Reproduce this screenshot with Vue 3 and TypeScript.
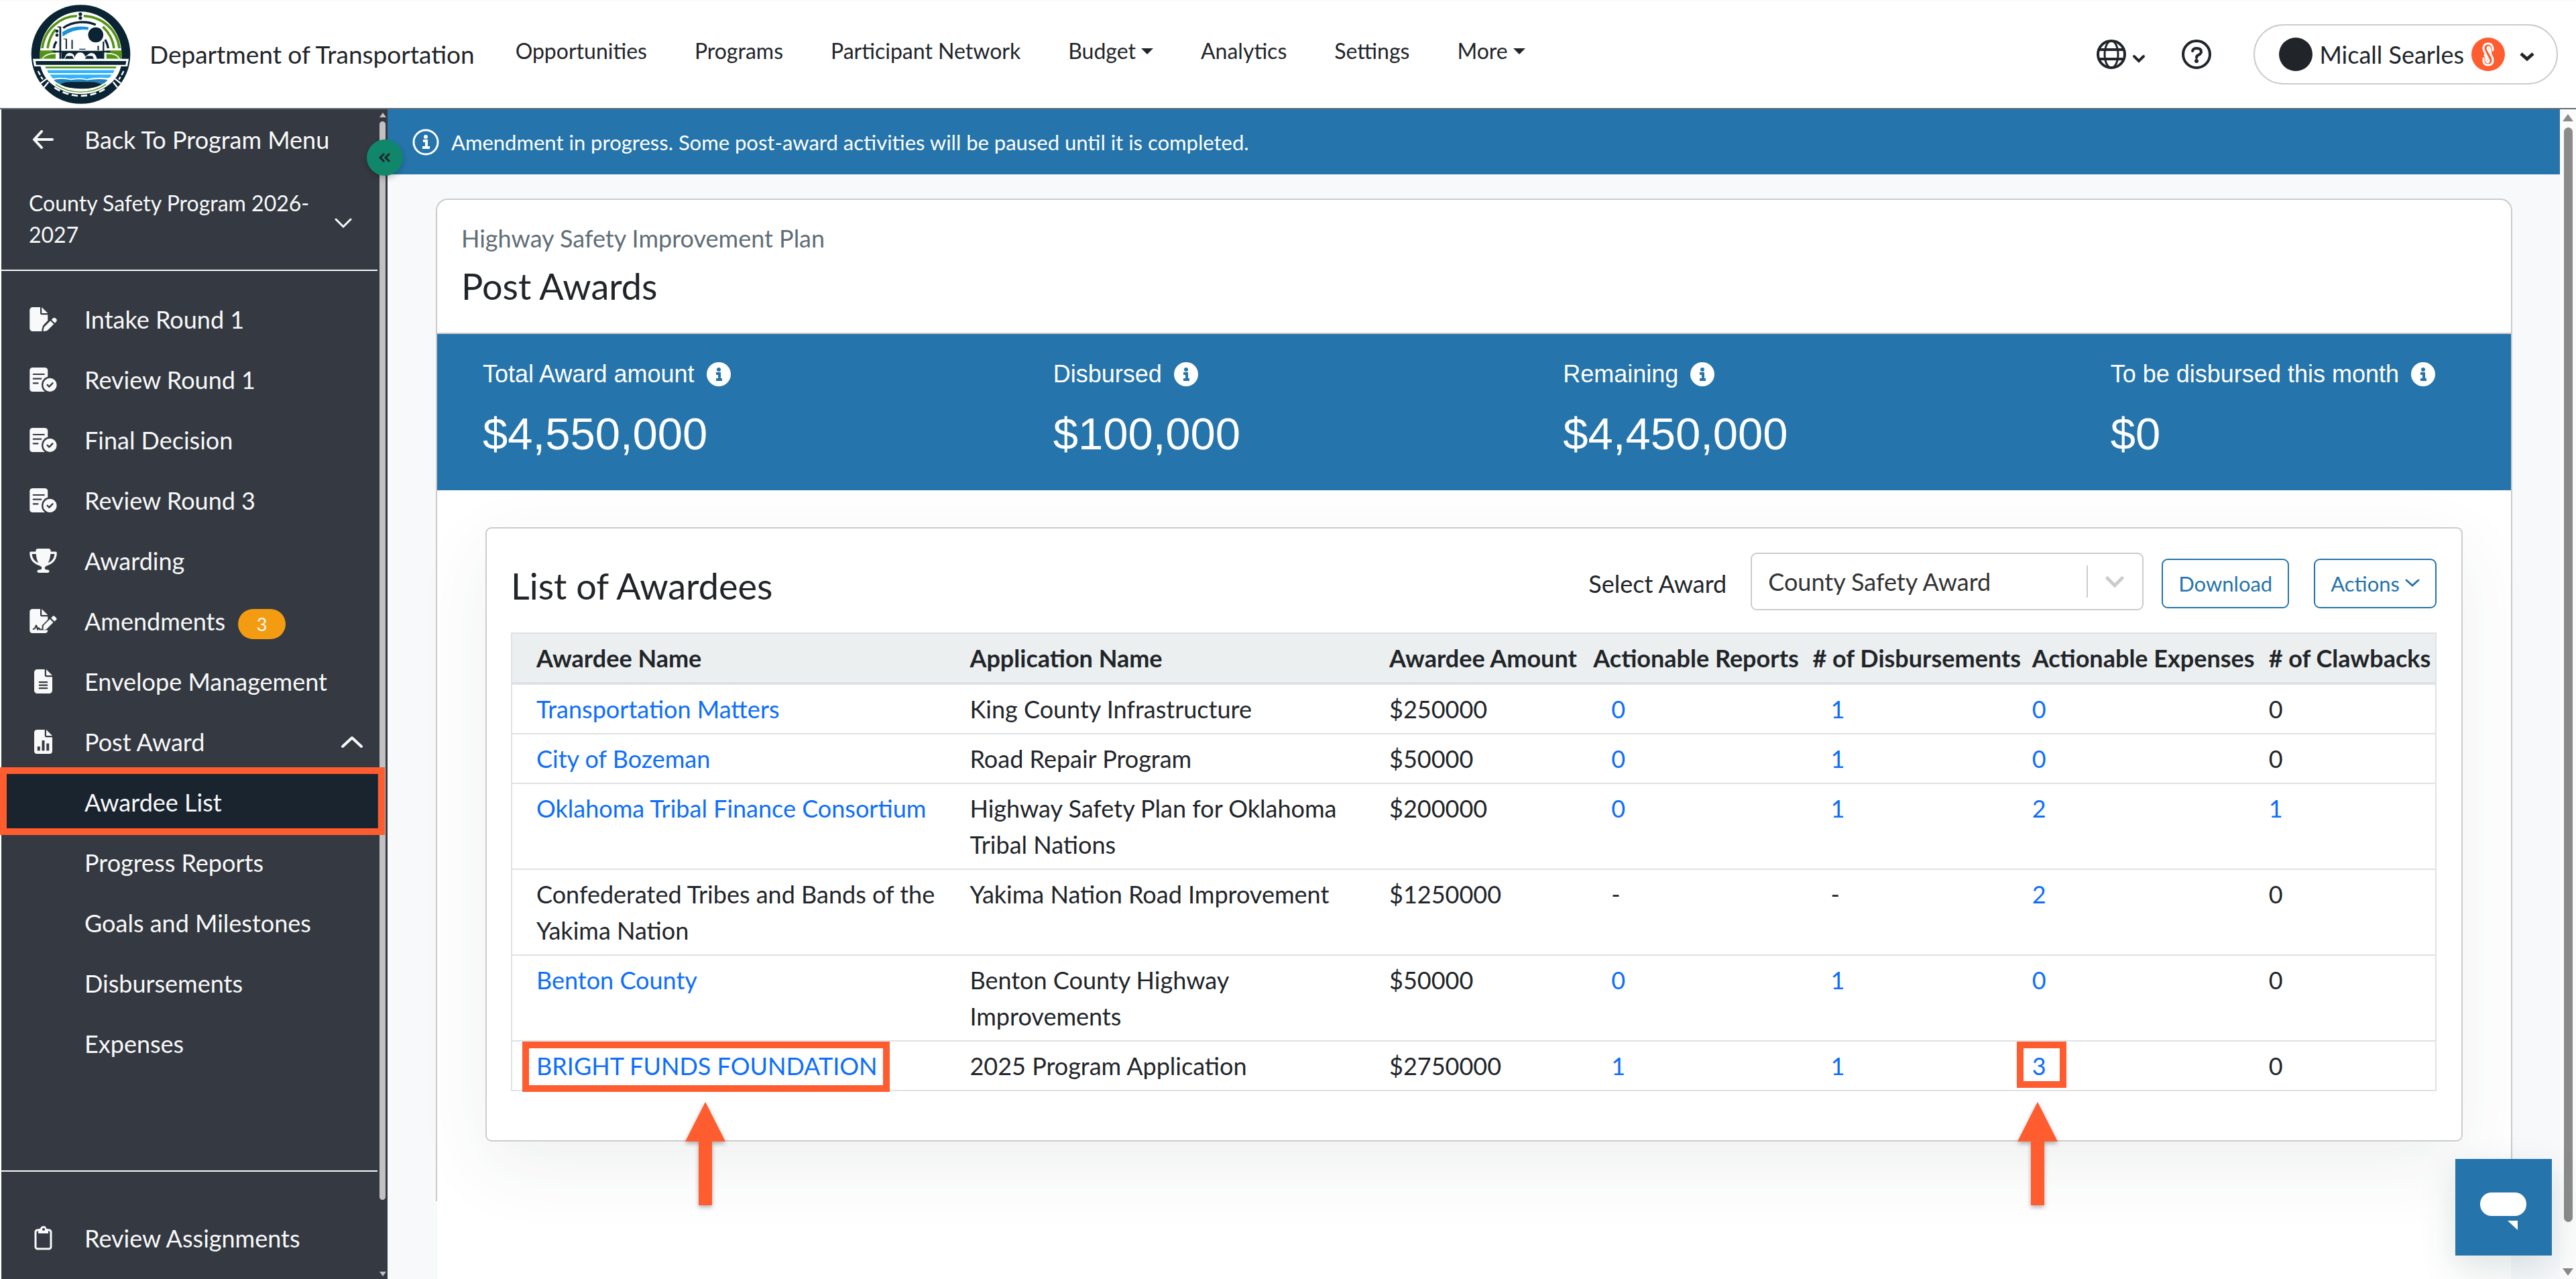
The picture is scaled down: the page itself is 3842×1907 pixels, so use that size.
<script setup lang="ts">
import { ref } from 'vue'

interface NavLink { label: string; menu?: boolean }
interface SideItem { label: string; icon: string; badge?: number }
interface Stat { label: string; value: string }
interface Count { text: string; link: boolean }
interface Awardee {
  name: string
  linked: boolean
  application: string
  amount: string
  counts: Count[]
  marked?: boolean
}

const navLinks: NavLink[] = [
  { label: 'Opportunities' },
  { label: 'Programs' },
  { label: 'Participant Network' },
  { label: 'Budget', menu: true },
  { label: 'Analytics' },
  { label: 'Settings' },
  { label: 'More', menu: true },
]

const sideItems: SideItem[] = [
  { label: 'Intake Round 1', icon: 'pen' },
  { label: 'Review Round 1', icon: 'review' },
  { label: 'Final Decision', icon: 'review' },
  { label: 'Review Round 3', icon: 'review' },
  { label: 'Awarding', icon: 'trophy' },
  { label: 'Amendments', icon: 'sign', badge: 3 },
  { label: 'Envelope Management', icon: 'lines' },
]

const subItems: string[] = ['Awardee List', 'Progress Reports', 'Goals and Milestones', 'Disbursements', 'Expenses']

const stats: Stat[] = [
  { label: 'Total Award amount', value: '$4,550,000' },
  { label: 'Disbursed', value: '$100,000' },
  { label: 'Remaining', value: '$4,450,000' },
  { label: 'To be disbursed this month', value: '$0' },
]

const columns: string[] = [
  'Awardee Name',
  'Application Name',
  'Awardee Amount',
  'Actionable Reports',
  '# of Disbursements',
  'Actionable Expenses',
  '# of Clawbacks',
]

const link = (text: string): Count => ({ text, link: true })
const plain = (text: string): Count => ({ text, link: false })

const awardees: Awardee[] = [
  { name: 'Transportation Matters', linked: true, application: 'King County Infrastructure', amount: '$250000', counts: [link('0'), link('1'), link('0'), plain('0')] },
  { name: 'City of Bozeman', linked: true, application: 'Road Repair Program', amount: '$50000', counts: [link('0'), link('1'), link('0'), plain('0')] },
  { name: 'Oklahoma Tribal Finance Consortium', linked: true, application: 'Highway Safety Plan for Oklahoma Tribal Nations', amount: '$200000', counts: [link('0'), link('1'), link('2'), link('1')] },
  { name: 'Confederated Tribes and Bands of the Yakima Nation', linked: false, application: 'Yakima Nation Road Improvement', amount: '$1250000', counts: [plain('-'), plain('-'), link('2'), plain('0')] },
  { name: 'Benton County', linked: true, application: 'Benton County Highway Improvements', amount: '$50000', counts: [link('0'), link('1'), link('0'), plain('0')] },
  { name: 'BRIGHT FUNDS FOUNDATION', linked: true, application: '2025 Program Application', amount: '$2750000', counts: [link('1'), link('1'), link('3'), plain('0')], marked: true },
]

const award = ref('County Safety Award')
</script>

<template>
  <div class="app">
    <header class="topbar">
      <a class="brand" href="#">
        <svg class="logo" viewBox="46 20 454 444" aria-hidden="true">
          <circle cx="273" cy="242" r="222" fill="#0b2433" />
          <path d="M90 240 A183 190 0 0 1 456 240 L456 270 A183 150 0 0 1 90 270 Z" fill="#fff" />
          <g fill="none" stroke="#549314" stroke-width="11">
            <path d="M100 215 C110 130 180 72 256 70" />
            <path d="M286 70 C370 74 436 130 446 215" />
            <path d="M124 215 C130 175 142 150 160 130" />
            <path d="M372 118 C400 145 418 180 422 215" />
          </g>
          <g fill="none" stroke="#0b2433" stroke-width="10">
            <path d="M194 124 C235 94 300 90 340 110" />
            <path d="M152 215 C154 200 158 192 164 184" />
            <path d="M382 176 C390 190 394 200 396 215" />
          </g>
          <path d="M190 142 Q240 108 308 120 L306 132 Q245 124 192 162 Z" fill="#1b93d6" />
          <circle cx="271" cy="62" r="8" fill="#0b2433" />
          <circle cx="271" cy="79" r="8" fill="#0b2433" />
          <circle cx="166" cy="138" r="7" fill="#0b2433" />
          <circle cx="166" cy="156" r="7" fill="#0b2433" />
          <circle cx="340" cy="155" r="34" fill="#0b2433" />
          <path d="M90 225H160V262H90Z M388 225H456V262H388Z" fill="#549314" />
          <path d="M100 262Q115 238 160 238M388 238Q435 238 446 262" fill="none" stroke="#fff" stroke-width="5" />
          <path d="M168 117h17v146h-8V122h-9zM205 172h6v46h-6zM231 177h6v41h-6zM348 204h6v20h-6zM371 185h7v78h-7zM195 171h12v3h-12zM266 217h28v4h-28z" fill="#0b2433" />
          <path d="M140 226H405V234H372V262H345Q340 234 318 236Q300 240 296 262H246Q246 238 225 236Q205 234 200 262H186V234H155Z" fill="#0b2433" />
          <path d="M244 264Q248 234 270 234Q292 234 296 264Z" fill="#fff" />
          <path d="M200 262L208 248H236L243 262V273H236V279H226V275H217V279H206V273H200ZM291 262L299 248H326L333 262V273H326V279H316V275H308V279H297V273H291Z" fill="#0b2433" stroke="#fff" stroke-width="3" />
          <path d="M58 262H488L482 296H64Z" fill="#fff" />
          <path d="M70 272H477L474 289H73Z" fill="#0b2433" />
          <path d="M103 296H443Q405 408 273 408Q141 408 103 296Z" fill="#fff" />
          <path d="M113 297H433L430 305H117Z" fill="#549314" />
          <path d="M122 313H424L418 326H128ZM134 333H412Q406 342 400 348Q340 344 300 353Q270 345 230 352Q190 344 148 350Z" fill="#31b2ff" />
          <path d="M152 356Q190 348 230 357Q270 350 300 358Q350 350 394 356Q384 370 366 378H182Q160 368 152 356Z" fill="#2380b5" />
          <path d="M182 378Q190 366 230 366H316Q350 366 366 378Q330 398 273 396Q215 396 182 378Z" fill="#0b2433" />
          <path d="M160 377Q210 411 273 411Q336 411 386 377" fill="none" stroke="#549314" stroke-width="4" />
          <path d="M155 391Q212 428 273 428Q334 428 391 391" fill="none" stroke="#fff" stroke-width="8" stroke-dasharray="28 14" />
          <path d="M81 317L91 335M94 343L103 354M465 317L456 335M451 343L444 354" stroke="#fff" stroke-width="7" />
          <path d="M93 372L122 350M108 390L128 366M452 372L424 350M437 390L418 366" stroke="#fff" stroke-width="7" />
        </svg>
        <span>Department of Transportation</span>
      </a>
      <nav class="topnav" aria-label="Main">
        <a v-for="item in navLinks" :key="item.label" href="#">
          {{ item.label }}<i v-if="item.menu" class="caret" aria-hidden="true"></i>
        </a>
      </nav>
      <div class="tools">
        <button class="tool" type="button" aria-label="Language">
          <svg class="ico-45" viewBox="0 0 45 45" fill="none" stroke="#212529">
            <circle cx="22" cy="22" r="20" stroke-width="4" />
            <ellipse cx="22" cy="22" rx="10" ry="20" stroke-width="3" />
            <path d="M3 15H42M3 29H42" stroke-width="4" />
          </svg>
          <svg class="chev-20" viewBox="0 0 20 14"><path d="M3 3L10 10L17 3" fill="none" stroke="#212529" stroke-width="4" stroke-linecap="round" /></svg>
        </button>
        <button class="tool" type="button" aria-label="Help">
          <svg class="ico-45" viewBox="0 0 45 45" fill="none" stroke="#212529">
            <circle cx="22" cy="22" r="20" stroke-width="4" />
            <path d="M16 17Q17 13 22 13Q29 13 29 18Q29 21 25 23Q22 24 22 27" stroke-width="4" stroke-linecap="round" />
            <circle cx="22" cy="32" r="3" fill="#212529" stroke="none" />
          </svg>
        </button>
        <button class="profile" type="button">
          <i class="avatar" aria-hidden="true"></i>
          <span>Micall Searles</span>
          <svg class="org" viewBox="0 0 50 50" aria-hidden="true">
            <circle cx="25" cy="25" r="25" fill="#ff5c30" />
            <path d="M32 19V16Q31 9 25 9Q18 9 18 16Q18 18 19 20L26 34Q26 37 24 37Q22 36 22 33V30L20 26M18 31V34Q18 41 25 41Q32 41 32 34Q32 31 31 29L24 17Q24 14 26 14Q28 15 28 18L29 24" fill="none" stroke="#fff" stroke-width="3" stroke-linecap="round" stroke-linejoin="round" />
          </svg>
          <svg class="chev-22" viewBox="0 0 22 15"><path d="M2 3L11 11L20 3" fill="none" stroke="#212529" stroke-width="5" /></svg>
        </button>
      </div>
    </header>

    <div class="body">
      <aside class="sidebar">
        <div class="menu">
          <a class="item back" href="#">
            <span class="slot">
              <svg class="ico-arrow" viewBox="0 0 32 28"><path d="M14 2L3 14L14 26M3 14H30" fill="none" stroke="#f8f9fa" stroke-width="4" stroke-linecap="round" stroke-linejoin="round" /></svg>
            </span>
            Back To Program Menu
          </a>
          <button class="program" type="button">
            <span>County Safety Program 2026-2027</span>
            <svg class="chev-26" viewBox="0 0 26 16"><path d="M2 2L13 13L24 2" fill="none" stroke="#f8f9fa" stroke-width="3" stroke-linecap="round" /></svg>
          </button>
          <nav class="group" aria-label="Program">
            <a v-for="item in sideItems" :key="item.label" class="item" href="#">
              <span class="slot">
                <svg v-if="item.icon === 'pen'" class="ico-wide" viewBox="0 0 576 512" fill="#f8f9fa">
                  <path d="M0 64C0 28.700 28.700 0 64 0L224 0l0 128c0 17.700 14.300 32 32 32l128 0 0 125.700-86.800 86.800c-10.300 10.300-17.500 23.100-21 37.200l-18.700 74.900c-2.300 9.200-1.800 18.800 1.300 27.500L64 512c-35.300 0-64-28.700-64-64L0 64zm384 64l-128 0L256 0 384 128zM549.800 235.700l14.400 14.400c15.600 15.600 15.600 40.900 0 56.600l-29.400 29.400-71-71 29.400-29.400c15.600-15.600 40.900-15.600 56.600 0zM311.900 417L441.100 287.800l71 71L382.900 487.900c-4.100 4.100-9.200 7-14.900 8.400l-60.100 15c-5.500 1.400-11.200-.2-15.200-4.200s-5.600-9.700-4.200-15.200l15-60.100c1.400-5.600 4.300-10.800 8.400-14.900z" />
                </svg>
                <svg v-else-if="item.icon === 'review'" class="ico-wide" viewBox="0 0 576 512">
                  <rect width="384" height="512" rx="62" fill="#f8f9fa" />
                  <path d="M78 142H306M78 237H242M78 332H176" stroke="#353941" stroke-width="30" stroke-linecap="round" />
                  <circle cx="430" cy="368" r="178" fill="#353941" />
                  <circle cx="430" cy="368" r="144" fill="#f8f9fa" />
                  <path d="M376 368L414 406L486 332" fill="none" stroke="#353941" stroke-width="34" stroke-linecap="round" stroke-linejoin="round" />
                </svg>
                <svg v-else-if="item.icon === 'trophy'" class="ico-wide" viewBox="0 0 576 512" fill="#f8f9fa">
                  <path d="M400 0L176 0c-26.500 0-48.100 21.800-47.100 48.200c.2 5.300 .4 10.600 .7 15.800L24 64C10.700 64 0 74.700 0 88c0 92.600 33.500 157 78.500 200.700c44.300 43.100 98.300 64.800 138.100 75.800c23.400 6.500 39.400 26 39.400 45.600c0 20.900-17 37.900-37.900 37.900L192 448c-17.700 0-32 14.300-32 32s14.300 32 32 32l192 0c17.700 0 32-14.300 32-32s-14.300-32-32-32l-26.100 0C337 448 320 431 320 410.100c0-19.600 15.900-39.200 39.400-45.600c39.900-11 93.900-32.700 138.200-75.800C542.500 245 576 180.600 576 88c0-13.300-10.700-24-24-24L446.400 64c.3-5.200 .5-10.400 .7-15.800C448.100 21.800 426.500 0 400 0zM48.900 112l84.400 0c9.100 90.100 29.200 150.300 51.900 190.600c-24.900-11-50.800-26.500-73.200-48.300c-32-31.100-58-76-63-142.300zM464.100 254.300c-22.400 21.800-48.300 37.300-73.200 48.300c22.700-40.300 42.800-100.500 51.900-190.600l84.400 0c-5.100 66.300-31.100 111.200-63 142.300z" />
                </svg>
                <svg v-else-if="item.icon === 'sign'" class="ico-wide" viewBox="0 0 576 512">
                  <path d="M64 0H224V128Q224 160 256 160H384V448Q384 512 320 512H64Q0 512 0 448V64Q0 0 64 0Z" fill="#f8f9fa" />
                  <path d="M256 0V128H384Z" fill="#f8f9fa" />
                  <path d="M78 426Q108 424 116 398L134 356Q142 342 146 358L168 436L182 408Q192 394 200 408L212 434H384" fill="none" stroke="#353941" stroke-width="30" stroke-linejoin="round" stroke-linecap="round" />
                  <path d="M262 436V350L450 160L560 250L380 436Z" fill="#353941" />
                  <path d="M290 444V372Q290 354 302 342L430 214L500 284L376 410Q346 440 312 444Z" fill="#f8f9fa" />
                  <path d="M453 191L486 156Q508 134 530 156L562 188Q584 210 562 232L526 264Z" fill="#f8f9fa" />
                </svg>
                <svg v-else class="ico-file" viewBox="0 0 384 512" fill="#f8f9fa">
                  <path d="M64 0C28.700 0 0 28.700 0 64L0 448c0 35.300 28.700 64 64 64l256 0c35.300 0 64-28.700 64-64l0-288-128 0c-17.700 0-32-14.300-32-32L224 0 64 0zM256 0l0 128 128 0L256 0zM112 256l160 0c8.800 0 16 7.200 16 16s-7.200 16-16 16l-160 0c-8.800 0-16-7.200-16-16s7.200-16 16-16zm0 64l160 0c8.800 0 16 7.200 16 16s-7.200 16-16 16l-160 0c-8.800 0-16-7.200-16-16s7.200-16 16-16zm0 64l160 0c8.800 0 16 7.200 16 16s-7.200 16-16 16l-160 0c-8.800 0-16-7.200-16-16s7.200-16 16-16z" />
                </svg>
              </span>
              {{ item.label }}
              <span v-if="item.badge" class="badge">{{ item.badge }}</span>
            </a>
            <a class="item" href="#">
              <span class="slot">
                <svg class="ico-file" viewBox="0 0 384 512">
                  <path d="M64 0H224V128Q224 160 256 160H384V448Q384 512 320 512H64Q0 512 0 448V64Q0 0 64 0Z" fill="#f8f9fa" />
                  <path d="M256 0V128H384Z" fill="#f8f9fa" />
                  <path d="M96 382V418M192 256V418M288 320V418" stroke="#353941" stroke-width="56" stroke-linecap="square" />
                </svg>
              </span>
              Post Award
              <svg class="chev-32 push" viewBox="0 0 32 19"><path d="M2 16L16 3L30 16" fill="none" stroke="#f8f9fa" stroke-width="4" stroke-linecap="round" stroke-linejoin="round" /></svg>
            </a>
            <a v-for="(item, i) in subItems" :key="item" class="item sub" :class="{ active: i === 0 }" href="#">{{ item }}</a>
          </nav>
          <div class="foot">
            <a class="item" href="#">
              <span class="slot">
                <svg class="ico-file" viewBox="0 0 27 36">
                  <rect x="2" y="6" width="23" height="28" rx="3" fill="none" stroke="#f8f9fa" stroke-width="3" />
                  <path d="M6 11V5Q6 4 8 4H9Q10 0 14 0T18 4H19Q21 4 21 5V11Z" fill="#f8f9fa" />
                  <circle cx="14" cy="5" r="2" fill="#353941" />
                </svg>
              </span>
              Review Assignments
            </a>
          </div>
        </div>
        <div class="track" aria-hidden="true">
          <i class="up"></i>
          <i class="thumb"></i>
          <i class="down"></i>
        </div>
        <button class="collapse" type="button" aria-label="Collapse menu">
          <svg viewBox="0 0 18 16"><path d="M8 2L2 8L8 14M16 2L10 8L16 14" fill="none" stroke="#212529" stroke-width="3" /></svg>
        </button>
      </aside>

      <div class="content">
        <div class="notice" role="status">
          <svg class="ico-40" viewBox="0 0 40 40" aria-hidden="true">
            <circle cx="20" cy="20" r="18" fill="none" stroke="#fff" stroke-width="3" />
            <circle cx="20" cy="12" r="3" fill="#fff" />
            <path d="M16 18H21V28M15 28H26" fill="none" stroke="#fff" stroke-width="4" />
          </svg>
          Amendment in progress. Some post-award activities will be paused until it is completed.
        </div>
        <main class="main">
          <section class="panel">
            <div class="panel-head">
              <p class="crumb">Highway Safety Improvement Plan</p>
              <h1>Post Awards</h1>
            </div>
            <div class="stats">
              <div v-for="s in stats" :key="s.label" class="stat">
                <div class="stat-label">
                  {{ s.label }}
                  <svg class="ico-36" viewBox="0 0 36 36" aria-hidden="true">
                    <circle cx="18" cy="18" r="18" fill="#fff" />
                    <circle cx="18" cy="11" r="3" fill="#2574ab" />
                    <path d="M14 17H19V26M14 26H23" fill="none" stroke="#2574ab" stroke-width="4" />
                  </svg>
                </div>
                <div class="stat-value">{{ s.value }}</div>
              </div>
            </div>

            <section class="card">
              <div class="card-head">
                <h2>List of Awardees</h2>
                <label for="award">Select Award</label>
                <div class="select">
                  <select id="award" v-model="award">
                    <option>County Safety Award</option>
                  </select>
                  <svg class="chev-28" viewBox="0 0 28 18" aria-hidden="true"><path d="M3 3L14 14L25 3" fill="none" stroke="#ccc" stroke-width="5" stroke-linecap="round" /></svg>
                </div>
                <button class="btn" type="button">Download</button>
                <button class="btn" type="button">
                  Actions
                  <svg class="chev-22" viewBox="0 0 22 15"><path d="M2 3L11 11L20 3" fill="none" stroke="#2574ab" stroke-width="3" stroke-linecap="round" /></svg>
                </button>
              </div>
              <table>
                <colgroup>
                  <col class="w-name" /><col class="w-app" /><col class="w-amount" /><col class="w-reports" />
                  <col class="w-disb" /><col class="w-exp" /><col class="w-claw" />
                </colgroup>
                <thead>
                  <tr><th v-for="c in columns" :key="c" scope="col">{{ c }}</th></tr>
                </thead>
                <tbody>
                  <tr v-for="row in awardees" :key="row.name">
                    <td>
                      <span v-if="row.marked" class="callout name">
                        <a href="#">{{ row.name }}</a>
                        <i class="frame" aria-hidden="true"></i>
                        <svg class="arrow" viewBox="0 0 62 158" aria-hidden="true"><path d="M31 1L61 60H41V155H21V60H1Z" fill="#ff5c30" /></svg>
                      </span>
                      <a v-else-if="row.linked" href="#">{{ row.name }}</a>
                      <template v-else>{{ row.name }}</template>
                    </td>
                    <td>{{ row.application }}</td>
                    <td>{{ row.amount }}</td>
                    <td v-for="(c, i) in row.counts" :key="i" :class="{ indent: i < 2 }">
                      <span v-if="row.marked && i === 2" class="callout count">
                        <a href="#">{{ c.text }}</a>
                        <i class="frame" aria-hidden="true"></i>
                        <svg class="arrow" viewBox="0 0 62 158" aria-hidden="true"><path d="M31 1L61 60H41V155H21V60H1Z" fill="#ff5c30" /></svg>
                      </span>
                      <a v-else-if="c.link" href="#">{{ c.text }}</a>
                      <template v-else>{{ c.text }}</template>
                    </td>
                  </tr>
                </tbody>
              </table>
            </section>
          </section>
        </main>
      </div>

      <div class="page-track" aria-hidden="true">
        <i class="up"></i>
        <i class="thumb"></i>
        <i class="down"></i>
      </div>
    </div>

    <button class="chat" type="button" aria-label="Open chat">
      <svg viewBox="0 0 70 56"><rect width="69" height="35" rx="17" fill="#fff" /><path d="M41 42H56V56Z" fill="#fff" /></svg>
    </button>
  </div>
</template>

<style>
body {
  margin: 0;
  background: #fff;
}
</style>

<style scoped>
* {
  box-sizing: border-box;
}

.app {
  position: relative;
  display: flex;
  flex-direction: column;
  height: 100vh;
  overflow: hidden;
  font-family: Lato, "Liberation Sans", sans-serif;
  font-size: 36px;
  line-height: 54px;
  color: #212529;
}

a {
  color: inherit;
  text-decoration: none;
}

button {
  font: inherit;
  color: inherit;
  background: none;
  border: 0;
  padding: 0;
}

svg {
  display: block;
  flex: none;
}

h1,
h2,
p {
  margin: 0;
}

/* Header */
.topbar {
  display: flex;
  align-items: center;
  flex: none;
  height: 163px;
  padding: 0 27px 0 45px;
  border-top: 1px solid #fff5f7;
  border-bottom: 2px solid #5f6b72;
}

.brand {
  display: flex;
  align-items: center;
  gap: 27px;
  font-size: 37px;
}

.logo {
  width: 151px;
  height: 148px;
}

.topnav {
  display: flex;
  gap: 71px;
  margin: 0 0 10px 61px;
  font-size: 32px;
}

.topnav a {
  display: flex;
  align-items: center;
}

.caret {
  margin-left: 8px;
  border: 9px solid transparent;
  border-top-color: #212529;
  border-bottom: 0;
}

.tools {
  display: flex;
  align-items: center;
  margin-left: auto;
}

.tool {
  display: flex;
  align-items: center;
  gap: 8px;
  margin-right: 54px;
}

.tool + .tool {
  margin-right: 62px;
}

.tool .chev-20 {
  margin-top: 14px;
}

.profile {
  display: flex;
  align-items: center;
  height: 90px;
  padding: 0 33px 0 36px;
  border: 2px solid #ccc;
  border-radius: 45px;
}

.avatar {
  width: 50px;
  height: 50px;
  margin-right: 10px;
  border-radius: 50%;
  background: #212529;
}

.org {
  width: 50px;
  height: 50px;
  margin: 0 22px 0 11px;
}

.profile .chev-22 {
  margin-top: 6px;
}

.ico-45 { width: 45px; height: 45px; }
.ico-40 { width: 40px; height: 40px; }
.ico-36 { width: 36px; height: 36px; }
.ico-wide { width: 41px; height: 36px; }
.ico-file { width: 27px; height: 36px; }
.ico-arrow { width: 32px; height: 28px; }
.chev-20 { width: 20px; height: 14px; }
.chev-22 { width: 22px; height: 15px; }
.chev-26 { width: 26px; height: 16px; }
.chev-28 { width: 28px; height: 18px; }
.chev-32 { width: 32px; height: 19px; }

.body {
  display: flex;
  flex: 1;
  min-height: 0;
}

/* Sidebar */
.sidebar {
  position: relative;
  z-index: 2;
  display: flex;
  flex: 0 0 576px;
  margin-left: 2px;
  background: #353941;
  color: #f8f9fa;
}

.menu {
  display: flex;
  flex-direction: column;
  flex: 1;
  min-width: 0;
}

.item {
  position: relative;
  display: flex;
  align-items: center;
  height: 90px;
  padding: 0 22px 0 36px;
}

.slot {
  display: flex;
  justify-content: center;
  width: 52px;
  margin-right: 36px;
}

.sub {
  padding-left: 124px;
}

.push {
  margin-left: auto;
}

.badge {
  margin: 8px 0 0 19px;
  width: 71px;
  height: 45px;
  border-radius: 23px;
  background: #f39c12;
  font-size: 27px;
  line-height: 45px;
  text-align: center;
}

.program {
  display: flex;
  align-items: center;
  justify-content: space-between;
  padding: 26px 38px 29px 41px;
  border-bottom: 2px solid #f8f9fa;
  font-size: 32px;
  line-height: 47px;
  text-align: left;
}

.program span {
  max-width: 420px;
}

.program svg {
  margin-top: 14px;
}

.group {
  flex: 1;
  padding-top: 27px;
}

.active {
  background: #1a242e;
}

.active::after {
  content: "";
  position: absolute;
  z-index: 2;
  inset: -7px -11px -4px -2px;
  border: 10px solid #ff5c30;
}

.foot {
  padding: 54px 0 16px;
  border-top: 2px solid #f8f9fa;
}

.track {
  display: flex;
  flex-direction: column;
  align-items: center;
  width: 9px;
  margin: 0 3px;
  padding: 5px 0 4px;
}

.track .thumb {
  flex: 1;
  width: 9px;
  margin: 6px 0 107px;
  border-radius: 5px;
  background: #c1c1c1;
}

.up,
.down {
  border: 5px solid transparent;
}

.up {
  border-top: 0;
  border-bottom: 7px solid #c1c1c1;
}

.down {
  border-bottom: 0;
  border-top: 7px solid #c1c1c1;
}

.collapse {
  position: absolute;
  z-index: 3;
  top: 45px;
  right: -23px;
  display: flex;
  align-items: center;
  justify-content: center;
  width: 54px;
  height: 54px;
  border-radius: 50%;
  background: #10866b;
  box-shadow: 0 4px 9px rgba(0, 0, 0, 0.2);
}

.collapse svg {
  width: 18px;
  height: 16px;
}

/* Content */
.content {
  display: flex;
  flex-direction: column;
  flex: 1;
  min-width: 0;
  background: #f8f9fb;
}

.notice {
  display: flex;
  align-items: center;
  gap: 18px;
  flex: none;
  height: 97px;
  padding-left: 37px;
  background: #2574ab;
  color: #fff;
  font-size: 31px;
}

.main {
  display: flex;
  flex-direction: column;
  flex: 1;
  min-height: 0;
  padding: 36px 71px 0 72px;
}

.main::after {
  content: "";
  flex: 0 0 116px;
  margin: 0 2px;
  background: #fff;
}

.panel {
  position: relative;
  z-index: 1;
  flex: 1;
  border: 2px solid #ccc;
  border-bottom: 0;
  border-radius: 18px 18px 0 0;
  background: #fff;
}

.panel-head {
  padding: 30px 36px 37px;
  border-bottom: 2px solid #ccc;
}

.crumb {
  color: #5f6e76;
}

h1,
h2 {
  font-size: 54px;
  font-weight: 400;
  line-height: 65px;
}

h1 {
  margin-top: 12px;
}

.stats {
  display: flex;
  justify-content: space-between;
  padding: 33px 113px 34px 68px;
  background: #2574ab;
  color: #fff;
  font-family: "Liberation Sans", sans-serif;
}

.stat-label {
  display: flex;
  align-items: center;
  gap: 18px;
}

.stat-value {
  margin-top: 12px;
  font-size: 67px;
  line-height: 100px;
}

.card {
  margin: 55px 72px 0;
  padding: 36px 37px 73px 36px;
  border: 2px solid #ccc;
  border-radius: 9px;
  background: #fff;
  box-shadow: 0 36px 108px rgba(40, 60, 50, 0.08);
}

.card-head {
  display: flex;
  align-items: center;
  margin-bottom: 33px;
}

.card-head h2 {
  flex: 1;
  padding-top: 12px;
}

.card-head label {
  margin-top: 5px;
}

.select {
  position: relative;
  width: 586px;
  margin: 0 27px 0 36px;
}

.select select {
  display: block;
  width: 100%;
  height: 86px;
  padding: 0 90px 0 24px;
  border: 2px solid #ccc;
  border-radius: 9px;
  appearance: none;
  background: #fff;
  font: inherit;
  color: #333;
}

.select::after {
  content: "";
  position: absolute;
  top: 19px;
  bottom: 19px;
  right: 83px;
  width: 2px;
  background: #ccc;
}

.select svg {
  position: absolute;
  top: 35px;
  right: 29px;
  pointer-events: none;
}

.btn {
  display: flex;
  align-items: center;
  gap: 8px;
  height: 74px;
  margin-top: 5px;
  padding: 0 23px;
  border: 2px solid #2574ab;
  border-radius: 9px;
  color: #2574ab;
  font-size: 31px;
}

.btn + .btn {
  margin-left: 37px;
}

/* Table */
table {
  width: 100%;
  table-layout: fixed;
  border-collapse: collapse;
  border: 2px solid #dee2e6;
}

.w-name { width: 23.5%; }
.w-app { width: 21.8%; }
.w-amount { width: 10.6%; }
.w-reports { width: 11.4%; }
.w-disb { width: 11.4%; }
.w-exp { width: 12.3%; }
.w-claw { width: 9%; }

th,
td {
  padding: 9px;
  text-align: left;
  vertical-align: top;
  border-bottom: 2px solid #dee2e6;
}

th {
  background: #eceff0;
  border-bottom-width: 4px;
  font-weight: 700;
  white-space: nowrap;
}

th:first-child,
td:first-child,
.indent {
  padding-left: 36px;
}

td a {
  color: #0d6efd;
}

.callout {
  position: relative;
  display: inline-block;
  vertical-align: top;
}

.frame {
  position: absolute;
  border: 10px solid #ff5c30;
}

.name .frame {
  inset: -9px -18px -12px -21px;
}

.count .frame {
  inset: -9px -30px -6px -23px;
}

.arrow {
  position: absolute;
  top: 80px;
  left: calc(50% - 33px);
  width: 62px;
  height: 158px;
  filter: drop-shadow(0 3px 3px rgba(0, 0, 0, 0.3));
}

/* Page scrollbar */
.page-track {
  display: flex;
  flex-direction: column;
  align-items: center;
  width: 24px;
  padding: 7px 0 5px;
  background: #fcfcfc;
}

.page-track .thumb {
  flex: 1;
  width: 13px;
  margin: 9px 0 69px;
  border-radius: 7px;
  background: #8b8b8b;
}

.page-track .up,
.page-track .down {
  border-width: 11px 8px;
}

.page-track .up {
  border-top: 0;
  border-bottom-color: #8b8b8b;
}

.page-track .down {
  border-bottom: 0;
  border-top-color: #8b8b8b;
}

.chat {
  position: absolute;
  z-index: 2;
  right: 36px;
  bottom: 35px;
  display: flex;
  align-items: center;
  justify-content: center;
  width: 144px;
  height: 144px;
  padding-top: 12px;
  background: #2574ab;
  box-shadow: 0 18px 54px rgba(20, 60, 60, 0.15);
}

.chat svg {
  width: 70px;
  height: 56px;
}
</style>
